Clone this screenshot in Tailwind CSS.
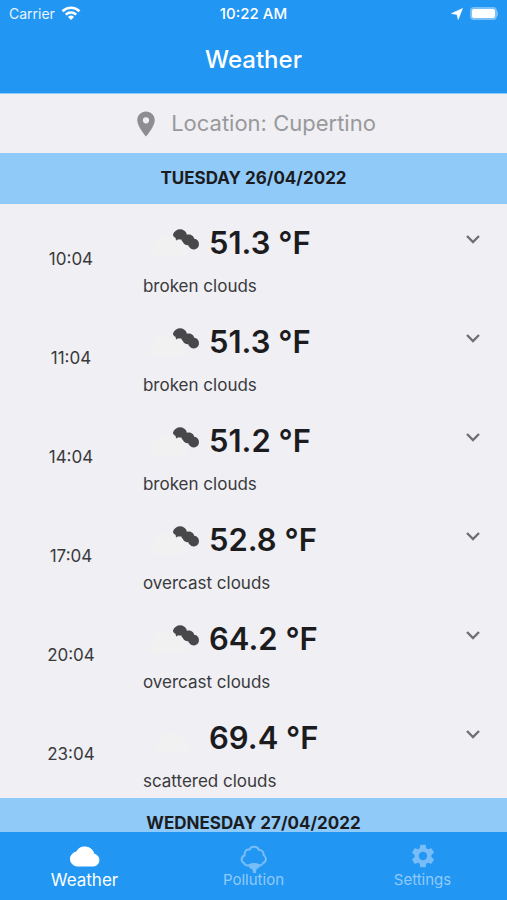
<!DOCTYPE html>
<html lang="en">
<head>
<meta charset="utf-8">
<meta name="viewport" content="width=device-width, initial-scale=1">
<title>Weather</title>
<script src="https://cdn.jsdelivr.net/npm/@tailwindcss/browser@4"></script>
</head>
<body class="flex h-screen flex-col overflow-hidden bg-[#efeff4] font-['Inter','Liberation_Sans',sans-serif] text-[#1c1c1e]">
<svg class="hidden" aria-hidden="true">
  <symbol id="clouds" viewBox="0 0 60 36">
    <path d="M9 32a6 6 0 0 1 2-11 9 9 0 0 1 16-7 10 10 0 0 1 16 9 5 5 0 0 1-1 9z" fill="#f1f1f2"/>
    <path d="M30 9.500C31.500 5 37 2.800 41 5.500c2 1.200 2.600 2.600 2.800 4.300 3-1.300 7 .7 7.400 4 3.600.4 5.600 3.700 4.500 7.200-1.200 3.700-6.700 4.700-9 1.500-1-.7-1.300-1.600-1.300-2.200-2.600.3-4.800-1.200-5.600-3.500-.9-.6-1.200-1.600-1.400-2.400-1.500.2-2.700.2-3.500-.2l-1.300 1.400c-.9-.7-1.100-1.500-.8-2.500-1.500-.8-2.500-1.600-2.800-3z" fill="#48484a"/>
  </symbol>
  <symbol id="cloud" viewBox="0 0 60 36">
    <path d="M14 31a6 6 0 0 1 2-10 9 9 0 0 1 15-6 9 9 0 0 1 12 8 4 4 0 0 1-1 8z" fill="#f1f1f2"/>
  </symbol>
  <symbol id="chevron" viewBox="0 0 24 24">
    <path d="M6 9l6 6 6-6" fill="none" stroke="#707074" stroke-width="2.400"/>
  </symbol>
</svg>

<header class="shrink-0 border-b border-[#90caf9] bg-[#2196f3] text-white">
  <div class="grid h-7 grid-cols-3 items-center px-[9px]">
    <div class="flex items-center gap-1.5 text-sm text-white/90">Carrier
      <svg class="h-4 w-5" viewBox="0 0 20 16" aria-label="Wi-Fi" fill="none" stroke="#fff" stroke-width="2.600"><path d="M1.500 5.200a12.200 12.200 0 0 1 17 0M4.800 8.600a7.500 7.500 0 0 1 10.400 0"/><path d="M10 14l-3-3a4.300 4.300 0 0 1 6 0z" fill="#fff" stroke="none"/></svg>
    </div>
    <div class="text-center text-[15px] font-medium">10:22 AM</div>
    <div class="flex items-center justify-end gap-1.5">
      <svg class="size-3" viewBox="0 0 12 12" aria-label="Location in use" fill="#fff"><path d="M11.500.5L7.200 11.500 6 6.500.5 5.500z" stroke="#fff" stroke-width=".6" stroke-linejoin="round"/></svg>
      <svg class="h-4 w-[29px]" viewBox="1 0 29 16" aria-label="Battery full"><rect x="2" y="1" width="27" height="13" rx="4" fill="#fff" opacity=".4"/><path d="M29 5c2 .5 2 4.500 0 5z" fill="#fff" opacity=".4"/><rect x="4" y="3" width="23" height="9" rx="2" fill="#fff"/></svg>
    </div>
  </div>
  <h1 class="pt-4 pb-[17px] text-center text-2xl leading-8 font-medium">Weather</h1>
</header>

<main class="min-h-0 flex-1 overflow-hidden">
  <button type="button" class="flex w-full items-center justify-center gap-2.5 py-3 text-[22px] leading-[35px] text-[#99999b]">
    <svg class="size-[30px]" viewBox="0 0 24 24" fill="#8e8e91" aria-hidden="true"><path d="M12 2C8.130 2 5 5.130 5 9c0 5.250 7 13 7 13s7-7.750 7-13c0-3.870-3.130-7-7-7zm0 9.500a2.500 2.500 0 1 1 0-5 2.500 2.500 0 0 1 0 5z"/></svg>
    Location: Cupertino
  </button>

  <section>
    <h2 class="bg-[#90caf9] pt-[11px] pb-3 text-center text-[17px] leading-7 font-bold">TUESDAY 26/04/2022</h2>
    <ul id="hours"></ul>
  </section>
  <section>
    <h2 class="bg-[#90caf9] pt-[11px] pb-3 text-center text-[17px] leading-7 font-bold">WEDNESDAY 27/04/2022</h2>
  </section>
</main>

<nav class="grid shrink-0 grid-cols-3 bg-[#2196f3] pt-3 pb-2 text-center text-[#90caf9]" aria-label="Main">
  <a href="#weather" aria-current="page" class="flex flex-col items-center text-[17px] leading-6 text-white">
    <svg class="h-6 w-8" viewBox="0 0 32 24" fill="#fff" aria-hidden="true"><path d="M8 22a7 7 0 0 1-.7-13.900A9.500 9.500 0 0 1 25 10.200 6 6 0 0 1 25 22z" stroke="#fff"/></svg>
    Weather
  </a>
  <a href="#pollution" class="flex flex-col items-center text-[15px] leading-6">
    <svg class="h-8 w-8" viewBox="0 0 32 32" fill="none" stroke="#79bdf8" stroke-width="2" aria-hidden="true"><path d="M11 21c-2 1-4.500 0-5-2-3-1-3.500-6 .5-7.500C6.500 6 9 5 11.500 5.500c2-4 8-3.500 9.500.5 3.500 0 5 2.500 4.500 5 3.500 2 3 7-.5 8-1 2.500-3 3-5 2"/><path d="M11 20c3-1.500 7-1.500 10.500 0l.5 2-2 2.500-1.500.5-.5 4h-3l-.5-3.500-2.500-1-1.500-2.500z" fill="#79bdf8" stroke="none"/></svg>
    <span class="-mt-2">Pollution</span>
  </a>
  <a href="#settings" class="flex flex-col items-center text-[15px] leading-6">
    <svg class="-mt-0.5 size-7" viewBox="0 0 24 24" fill="#79bdf8" aria-hidden="true"><path d="M19.140 12.940c.04-.3.060-.61.060-.94s-.02-.64-.07-.94l2.030-1.580a.49.49 0 0 0 .12-.61l-1.920-3.320a.49.49 0 0 0-.59-.22l-2.390.96c-.5-.38-1.030-.7-1.620-.94l-.36-2.540a.48.48 0 0 0-.48-.41h-3.840a.47.47 0 0 0-.47.41l-.36 2.540c-.59.24-1.130.57-1.620.94l-2.390-.96a.48.48 0 0 0-.59.22L2.740 8.870a.47.47 0 0 0 .12.610l2.030 1.580c-.05.3-.09.63-.09.94s.02.64.07.94l-2.030 1.580a.49.49 0 0 0-.12.610l1.920 3.320c.12.22.37.29.59.22l2.390-.96c.5.38 1.030.7 1.620.94l.36 2.540c.05.24.24.41.48.41h3.840c.24 0 .44-.17.47-.41l.36-2.540c.59-.24 1.130-.56 1.620-.94l2.390.96c.22.08.47 0 .59-.22l1.920-3.320a.47.47 0 0 0-.12-.61zM12 15.600a3.600 3.600 0 1 1 0-7.200 3.600 3.600 0 0 1 0 7.200z"/></svg>
    <span class="-mt-0.5">Settings</span>
  </a>
</nav>

<script>
const hours = [
  ['10:04', '51.3', 'broken clouds', 'clouds'],
  ['11:04', '51.3', 'broken clouds', 'clouds'],
  ['14:04', '51.2', 'broken clouds', 'clouds'],
  ['17:04', '52.8', 'overcast clouds', 'clouds'],
  ['20:04', '64.2', 'overcast clouds', 'clouds'],
  ['23:04', '69.4', 'scattered clouds', 'cloud']
];
document.getElementById('hours').innerHTML = hours.map(([time, temp, text, icon]) => `
  <li class="grid grid-cols-[28%_1fr_auto] gap-x-px pt-[19px] pb-[5px]">
    <time class="pt-6 text-center text-[17px] leading-6 text-[#3a3a3c]">${time}</time>
    <div>
      <div class="flex h-10 items-center gap-1.5">
        <svg class="h-9 w-15" viewBox="0 0 60 36" aria-hidden="true"><use href="#${icon}"/></svg>
        <span class="text-[31px] leading-10 font-semibold">${temp} °F</span>
      </div>
      <p class="pt-[11px] text-[17px] leading-6 text-[#3a3a3c]">${text}</p>
    </div>
    <button type="button" class="h-8 pr-5.5" aria-label="Show details for ${time}"><svg class="size-6" viewBox="0 0 24 24"><use href="#chevron"/></svg></button>
  </li>`).join('');
</script>
</body>
</html>
